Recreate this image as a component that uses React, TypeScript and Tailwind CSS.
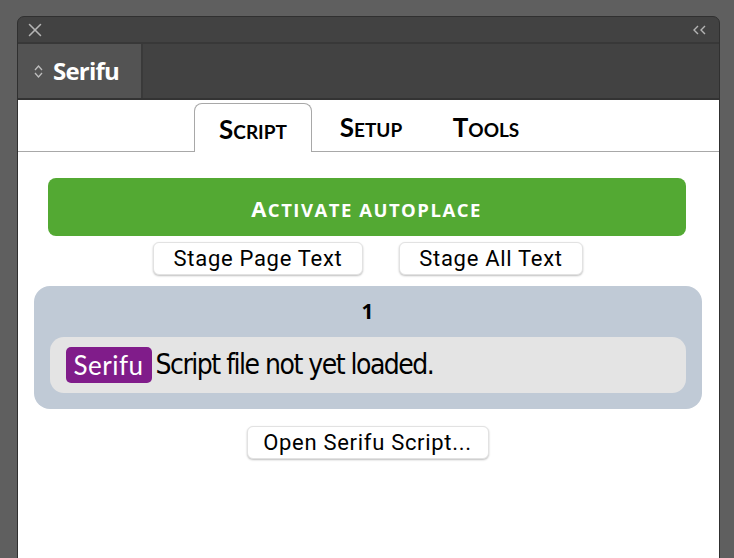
import { X } from 'lucide-react';

const btn =
    'h-[33px] bg-white rounded-[6px] border border-[#e2e2e2] shadow-[0_1px_2px_rgba(0,0,0,0.25)] text-[22px] tracking-[0.7px] text-black font-["Roboto",sans-serif] leading-none flex items-center justify-center';

function SmallCaps({ first, rest, big, small }: { first: string; rest: string; big: string; small: string }) {
    return (
        <span className="leading-none uppercase">
            <span className={big}>{first}</span>
            <span className={small}>{rest}</span>
        </span>
    );
}

export default function App() {
    return (
        <div className="h-[558px] w-[734px] overflow-hidden bg-[#5f5f5f] pt-[16px] pl-[17px]">
            <div className="w-[703px] h-[560px] flex flex-col rounded-t-[7px] border border-[#303030] bg-[#424242] overflow-hidden">
                {/* Title bar */}
                <div className="h-[27px] shrink-0 flex items-center justify-between pl-[6px] pr-[9px] border-b-2 border-[#383838]">
                    <X className="h-[22px] w-[22px] text-[#b4b4b4]" strokeWidth={1.7} />
                    <svg width="16" height="12" viewBox="0 0 16 12" className="mr-[2px]">
                        <path d="M6 2 L2 6 L6 10 M13 2 L9 6 L13 10" stroke="#b4b4b4" strokeWidth="1.4" fill="none" />
                    </svg>
                </div>

                {/* Panel tabs */}
                <div className="h-[56px] shrink-0 flex border-b-2 border-[#333333]">
                    <div className="w-[125px] bg-[#535353] border-r-2 border-[#3a3a3a] flex items-center gap-[10px] pl-[16px]">
                        <svg width="9" height="15" viewBox="0 0 9 15">
                            <path d="M1 6 L4.5 2 L8 6 M1 9 L4.5 13 L8 9" stroke="#bdbdbd" strokeWidth="1.3" fill="none" />
                        </svg>
                        <span className='text-[24px] font-bold text-white font-["Open_Sans",sans-serif] tracking-[-0.8px] leading-none'>
                            Serifu
                        </span>
                    </div>
                </div>

                {/* Content */}
                <div className="flex-1 bg-white">
                    {/* Tabs */}
                    <div className='h-[52px] flex items-end justify-center border-b border-[#a8a8a8] pl-[5px] font-["Lato",sans-serif] font-bold text-black'>
                        <div className="h-[49px] w-[118px] -mb-px bg-white border border-b-0 border-[#a8a8a8] rounded-t-[8px] flex items-center justify-center">
                            <span className="mt-[4px]">
                                <SmallCaps first="S" rest="cript" big="text-[26px]" small="text-[19px]" />
                            </span>
                        </div>
                        <div className="h-[49px] w-[118px] flex items-center justify-center">
                            <span className="mt-[4px]">
                                <SmallCaps first="S" rest="etup" big="text-[26px]" small="text-[19px]" />
                            </span>
                        </div>
                        <div className="h-[49px] w-[118px] flex items-center justify-center pr-[6px]">
                            <span className="mt-[4px]">
                                <SmallCaps first="T" rest="ools" big="text-[26px]" small="text-[19px]" />
                            </span>
                        </div>
                    </div>

                    <div className="pl-[16px] pr-[18px] pt-[26px] flex flex-col items-center">
                        <button className='w-[638px] h-[58px] mr-[2px] rounded-[8px] bg-[#53a933] text-white font-["Open_Sans",sans-serif] font-bold tracking-[1.5px] flex items-center justify-center pt-[3px]'>
                            <SmallCaps first="A" rest="ctivate autoplace" big="text-[22px]" small="text-[18.5px]" />
                        </button>

                        <div className="flex gap-[36px] mt-[6px] pl-[1px]">
                            <button className={`${btn} w-[210px]`}>Stage Page Text</button>
                            <button className={`${btn} w-[184px]`}>Stage All Text</button>
                        </div>

                        <div className="w-[668px] mt-[11px] rounded-[16px] bg-[#c0cad6] px-[16px] pt-[15px] pb-[16px]">
                            <div className='text-center text-[21px] font-bold text-black font-["Open_Sans",sans-serif] leading-none mb-[15px]'>1</div>
                            <div className="h-[56px] rounded-[14px] bg-[#e4e4e4] flex items-center pl-[16px] gap-[4px]">
                                <span className='h-[36px] px-[8px] rounded-[5px] bg-[#801c8a] text-white text-[26px] tracking-[0.5px] font-["Lato",sans-serif] flex items-center leading-none'>
                                    Serifu
                                </span>
                                <span className='text-[28px] text-black font-["DejaVu_Sans_Condensed","DejaVu_Sans",sans-serif] tracking-[-1.5px] leading-none'>
                                    Script file not yet loaded.
                                </span>
                            </div>
                        </div>

                        <button className={`${btn} w-[242px] mt-[17px]`}>Open Serifu Script...</button>
                    </div>
                </div>
            </div>
        </div>
    );
}
